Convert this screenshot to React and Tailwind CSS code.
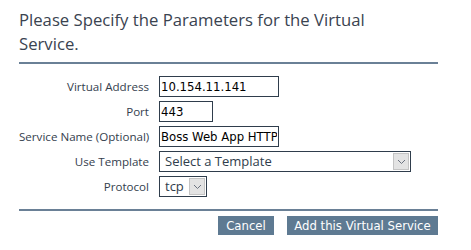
import { useState } from 'react';

const labelCls = "text-right text-[11.6px] leading-[21px] text-[#343e4d] whitespace-nowrap";
const inputCls = "h-[21px] border border-[#2f3d4c] bg-white px-[1px] text-[13px] text-black outline-none";
const tahoma = { fontFamily: '"DejaVu Sans Condensed", "DejaVu Sans", sans-serif' };

const Chevron = () => (
  <svg width="9" height="6" viewBox="0 0 9 6" fill="none">
    <path d="M1 1l3.5 3.5L8 1" stroke="#6b7280" strokeWidth="1" />
  </svg>
);

const SelectBox = ({ width, value }) => (
  <div className={`flex h-[21px] items-center border border-[#2f3d4c] bg-white ${width}`}>
    <span className="flex-1 pl-[5px] text-[13px] text-[#2f3d4c] leading-none">
      {value}
    </span>
    <span className="m-[1px] flex h-[17px] w-[16px] items-center justify-center border border-[#c4c4c4] bg-[#e3e3e3]">
      <Chevron />
    </span>
  </div>
);

export default function App() {
  const [form] = useState({
    address: '10.154.11.141',
    port: '443',
    name: 'Boss Web App HTTP',
  });

  return (
    <div className="h-[250px] w-[471px] bg-white px-[19px] pt-[8px]" style={{ fontFamily: '"Open Sans", "Noto Sans", sans-serif' }}>
      <h1 className="max-w-[400px] text-[16.7px] leading-[24px] font-normal text-[#3a4350]">
        Please Specify the Parameters for the Virtual Service.
      </h1>
      <div className="mt-[6px] h-[2px] w-[419px] bg-[#6a8096]" />

      <div className="mt-[12px] grid grid-cols-[130px_auto] gap-x-[10px] gap-y-[4px]">
        <div className={labelCls}>Virtual Address</div>
        <input readOnly value={form.address} className={`${inputCls} w-[120px]`} style={tahoma} />

        <div className={labelCls}>Port</div>
        <input readOnly value={form.port} className={`${inputCls} w-[54px]`} style={tahoma} />

        <div className={labelCls}>Service Name (Optional)</div>
        <input readOnly value={form.name} className={`${inputCls} w-[120px]`} style={tahoma} />

        <div className={labelCls}>Use Template</div>
        <SelectBox width="w-[252px]" value="Select a Template" />

        <div className={labelCls}>Protocol</div>
        <SelectBox width="w-[48px]" value="tcp" />
      </div>

      <div className="mt-[12px] h-[2px] w-[419px] bg-[#6a8096]" />

      <div className="mt-[5px] flex w-[419px] justify-end gap-[13px]">
        <button className="h-[19px] w-[56px] bg-[#5e7a92] text-[13px] leading-[19px] text-white" style={tahoma}>
          Cancel
        </button>
        <button className="h-[19px] w-[151px] bg-[#5e7a92] text-[13px] leading-[19px] text-white" style={tahoma}>
          Add this Virtual Service
        </button>
      </div>
    </div>
  );
}
